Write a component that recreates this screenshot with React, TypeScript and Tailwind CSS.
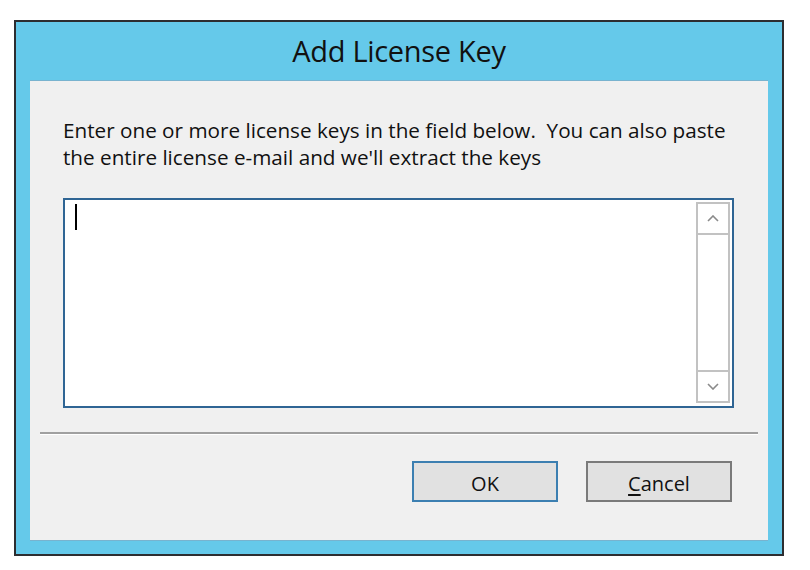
import React from "react";

const font = { fontFamily: '"Open Sans", "Noto Sans", sans-serif' };

function Chevron({ up }: { up?: boolean }) {
  return (
    <svg width="12" height="7" viewBox="0 0 12 7" className="block">
      <path
        d={up ? "M1 6 L6 1 L11 6" : "M1 1 L6 6 L11 1"}
        fill="none"
        stroke="#8a8a8a"
        strokeWidth="1.6"
      />
    </svg>
  );
}

export default function App() {
  return (
    <div className="w-[810px] h-[570px] bg-white pt-[20px] pl-[14px]" style={font}>
      {/* Dialog frame */}
      <div className="w-[770px] h-[536px] border-2 border-[#2d2d30] bg-[#65c9ea] flex flex-col px-[14px] pb-[13px]">
        <div className="h-[58px] flex items-center justify-center">
          <h1 className="text-[29px] leading-none text-[#111] tracking-[-0.3px] -mt-[2px]">Add License Key</h1>
        </div>

        {/* Content panel */}
        <div className="flex-1 bg-[#f0f0f0] border-t border-b border-[#78b3cf] px-[10px] flex flex-col">
          <div className="pl-[23px] pr-[24px] pt-[36px]">
            <p className="text-[20.7px] leading-[27px] text-[#111] whitespace-nowrap">
              Enter one or more license keys in the field below.&nbsp; You can also paste
              <br />
              the entire license e-mail and we'll extract the keys
            </p>

            {/* Text area */}
            <div className="mt-[27px] h-[210px] border-2 border-[#2f6594] bg-white flex">
              <div className="flex-1 pl-[10px] pt-[4px]">
                <div className="w-[2px] h-[26px] bg-black" />
              </div>
              <div className="w-[34px] mt-[2px] mr-[2px] mb-[3px] border-2 border-[#c2c2c2] flex flex-col">
                <div className="h-[31px] border-b-2 border-[#c2c2c2] flex items-center justify-center">
                  <Chevron up />
                </div>
                <div className="flex-1" />
                <div className="h-[31px] border-t-2 border-[#c2c2c2] flex items-center justify-center">
                  <Chevron />
                </div>
              </div>
            </div>
          </div>

          {/* Etched separator */}
          <div className="mt-[24px] border-t-2 border-[#a0a0a0] border-b border-b-white" />

          {/* Buttons */}
          <div className="mt-[26px] flex justify-end gap-[28px] pr-[26px]">
            <button className="w-[146px] h-[41px] border-2 border-[#3c7fb1] bg-[#e1e1e1] text-[20px] leading-none text-[#111] pt-[5px]">
              OK
            </button>
            <button className="w-[146px] h-[41px] border-2 border-[#7a7a7a] bg-[#e1e1e1] text-[20px] leading-none text-[#111] pt-[5px]">
              <span className="underline underline-offset-[3px]">C</span>ancel
            </button>
          </div>
        </div>
      </div>
    </div>
  );
}
